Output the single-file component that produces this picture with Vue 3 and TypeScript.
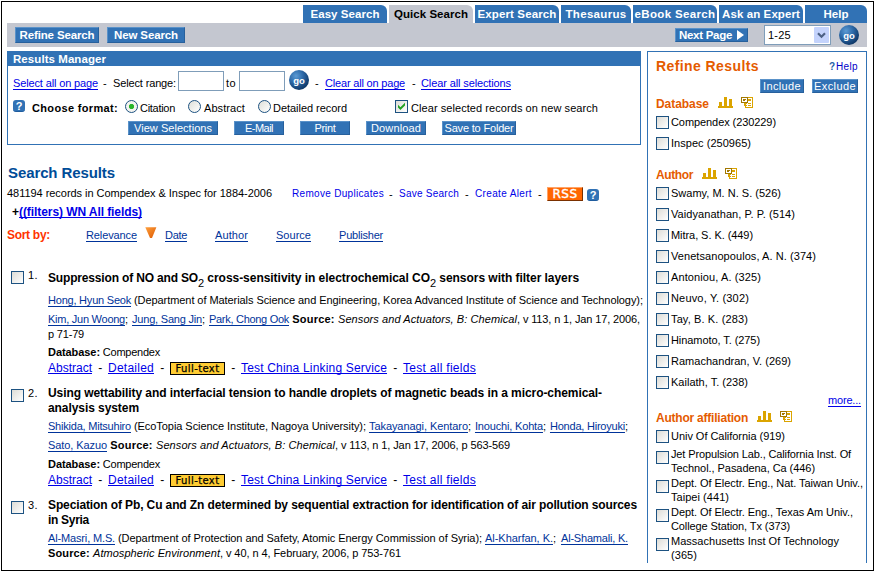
<script setup lang="ts">
import type { ObjectDirective } from 'vue'

type Kind = 'text' | 'link' | 'bold' | 'italic' | 'sub' | 'big' | 'badge'
type Seg = [kind: Kind, text: string, width: number]
interface Line { gap: number; title?: boolean; service?: boolean; segs: Seg[] }
interface Result { id: number; lines: Line[] }
interface Facet { name: string; width: number; items: [string, number][][]; more?: boolean }

// Tracks a run of text so that it takes up the given number of pixels.
const vFit: ObjectDirective<HTMLElement, number> = {
  mounted(el, { value }) {
    const chars = (el.textContent ?? '').length
    if (!chars || !value) return
    const natural = el.getBoundingClientRect().width
    el.style.letterSpacing = `${((value - natural) / chars).toFixed(3)}px`
  },
}

const tabs: { label: string; text: number; size: string; active?: boolean }[] = [
  { label: 'Easy Search', text: 69, size: 'wide' },
  { label: 'Quick Search', text: 74, size: 'wide', active: true },
  { label: 'Expert Search', text: 79, size: 'wide' },
  { label: 'Thesaurus', text: 61, size: 'mid' },
  { label: 'eBook Search', text: 81, size: 'wide' },
  { label: 'Ask an Expert', text: 78, size: 'wide' },
  { label: 'Help', text: 25, size: 'last' },
]

const actions: [string, string, number][] = [
  ['view', 'View Selections', 78],
  ['mail', 'E-Mail', 28],
  ['print', 'Print', 21],
  ['down', 'Download', 50],
  ['save', 'Save to Folder', 69],
]

const services: Line = {
  gap: 2,
  service: true,
  segs: [
    ['big', 'Abstract', 44], ['text', '  -  ', 16], ['big', 'Detailed', 46], ['text', '  -  ', 16],
    ['badge', 'Full-text', 44], ['text', '  -  ', 16], ['big', 'Test China Linking Service', 146],
    ['text', '  -  ', 16], ['big', 'Test all fields', 73],
  ],
}
const database = (gap: number): Line => ({ gap, segs: [['bold', 'Database:', 52], ['text', ' Compendex', 60]] })

const results: Result[] = [
  {
    id: 1,
    lines: [
      { gap: 0, title: true, segs: [
        ['text', 'Suppression of NO and SO', 150], ['sub', '2', 6],
        ['text', ' cross-sensitivity in electrochemical CO', 226], ['sub', '2', 6],
        ['text', ' sensors with filter layers', 143] ] },
      { gap: 8, segs: [
        ['link', 'Hong, Hyun Seok', 83],
        ['text', ' (Department of Materials Science and Engineering, Korea Advanced Institute of Science and Technology);', 512] ] },
      { gap: 5, segs: [
        ['link', 'Kim, Jun Woong', 77], ['text', '; ', 7], ['link', 'Jung, Sang Jin', 70], ['text', '; ', 7],
        ['link', 'Park, Chong Ook', 80], ['bold', ' Source: ', 49],
        ['italic', 'Sensors and Actuators, B: Chemical', 179], ['text', ', v 113, n 1, Jan 17, 2006,', 123] ] },
      { gap: 1, segs: [['text', 'p 71-79', 36]] },
      database(4),
      services,
    ],
  },
  {
    id: 2,
    lines: [
      { gap: 0, title: true, segs: [['text', 'Using wettability and interfacial tension to handle droplets of magnetic beads in a micro-chemical-', 554]] },
      { gap: 1, title: true, segs: [['text', 'analysis system', 91]] },
      { gap: 4, segs: [
        ['link', 'Shikida, Mitsuhiro', 83], ['text', ' (EcoTopia Science Institute, Nagoya University); ', 238],
        ['link', 'Takayanagi, Kentaro', 99], ['text', '; ', 7], ['link', 'Inouchi, Kohta', 68], ['text', '; ', 7],
        ['link', 'Honda, Hiroyuki', 75], ['text', ';', 3] ] },
      { gap: 5, segs: [
        ['link', 'Sato, Kazuo', 59], ['bold', ' Source: ', 49],
        ['italic', 'Sensors and Actuators, B: Chemical', 179], ['text', ', v 113, n 1, Jan 17, 2006, p 563-569', 175] ] },
      database(5),
      services,
    ],
  },
  {
    id: 3,
    lines: [
      { gap: 0, title: true, segs: [['text', 'Speciation of Pb, Cu and Zn determined by sequential extraction for identification of air pollution sources', 589]] },
      { gap: 1, title: true, segs: [['text', 'in Syria', 41]] },
      { gap: 4, segs: [
        ['link', 'Al-Masri, M.S.', 67],
        ['text', ' (Department of Protection and Safety, Atomic Energy Commission of Syria); ', 370],
        ['link', 'Al-Kharfan, K.', 68], ['text', ';  ', 8], ['link', 'Al-Shamali, K.', 67] ] },
      { gap: 1, segs: [
        ['bold', 'Source: ', 45], ['italic', 'Atmospheric Environment', 127],
        ['text', ', v 40, n 4, February, 2006, p 753-761', 181] ] },
    ],
  },
]

const facets: Facet[] = [
  { name: 'Database', width: 53, items: [[['Compendex (230229)', 105]], [['Inspec (250965)', 80]]] },
  {
    name: 'Author', width: 37, more: true,
    items: [
      [['Swamy, M. N. S. (526)', 110]], [['Vaidyanathan, P. P. (514)', 124]], [['Mitra, S. K. (449)', 82]],
      [['Venetsanopoulos, A. N. (374)', 145]], [['Antoniou, A. (325)', 90]], [['Neuvo, Y. (302)', 78]],
      [['Tay, B. K. (283)', 77]], [['Hinamoto, T. (275)', 89]], [['Ramachandran, V. (269)', 120]],
      [['Kailath, T. (238)', 77]],
    ],
  },
  {
    name: 'Author affiliation', width: 92,
    items: [
      [['Univ Of California (919)', 114]],
      [['Jet Propulsion Lab., California Inst. Of', 180], ['Technol., Pasadena, Ca (446)', 144]],
      [['Dept. Of Electr. Eng., Nat. Taiwan Univ.,', 192], ['Taipei (441)', 58]],
      [['Dept. Of Electr. Eng., Texas Am Univ.,', 182], ['College Station, Tx (373)', 119]],
      [['Massachusetts Inst Of Technology', 168], ['(365)', 26]],
    ],
  },
]
</script>

<template>
  <div class="frame">
    <nav class="tabs">
      <a v-for="t in tabs" :key="t.label" class="tab" :class="[t.size, { active: t.active }]"><span v-fit="t.text">{{ t.label }}</span></a>
    </nav>

    <header class="toolbar">
      <button class="btn heavy refine"><span v-fit="75">Refine Search</span></button>
      <button class="btn heavy new"><span v-fit="64">New Search</span></button>
      <button class="btn heavy next">
        <span v-fit="53">Next Page</span>
        <svg width="7" height="10" viewBox="0 0 7 10"><path d="M0 0 7 5 0 10Z" fill="#fff" /></svg>
      </button>
      <div class="select">
        <span v-fit="23">1-25</span>
        <i><svg width="9" height="7" viewBox="0 0 9 7"><path d="M1 1.2 4.5 4.7 8 1.2" fill="none" stroke="#4d6185" stroke-width="2.2" /></svg></i>
      </div>
      <button class="go">go</button>
    </header>

    <div class="columns">
      <main>
        <section class="manager">
          <h2><span v-fit="93">Results Manager</span></h2>
          <div class="range">
            <a class="blue" v-fit="85">Select all on page</a>
            <span>-</span>
            <span v-fit="63">Select range:</span>
            <input type="text" />
            <span v-fit="10">to</span>
            <input type="text" />
            <button class="go">go</button>
            <span>-</span>
            <a class="blue" v-fit="80">Clear all on page</a>
            <span>-</span>
            <a class="blue" v-fit="90">Clear all selections</a>
          </div>
          <div class="format">
            <b class="ask">?</b>
            <strong v-fit="86">Choose format:</strong>
            <i class="radio on"></i><span v-fit="35">Citation</span>
            <i class="radio"></i><span v-fit="41">Abstract</span>
            <i class="radio"></i><span v-fit="74">Detailed record</span>
            <i class="box">
              <svg width="9" height="9" viewBox="0 0 9 9"><path d="M1 2.7V5.4L3.4 8 8 3.4V.8L3.4 5.3Z" fill="#21a121" /></svg>
            </i>
            <span v-fit="187">Clear selected records on new search</span>
          </div>
          <div class="actions">
            <button v-for="a in actions" :key="a[0]" class="btn" :class="a[0]"><span v-fit="a[2]">{{ a[1] }}</span></button>
          </div>
        </section>

        <h1><span v-fit="107">Search Results</span></h1>
        <div class="summary">
          <span v-fit="265">481194 records in Compendex &amp; Inspec for 1884-2006</span>
          <a v-fit="92">Remove Duplicates</a><span>-</span>
          <a v-fit="60">Save Search</a><span>-</span>
          <a v-fit="57">Create Alert</a><span>-</span>
          <b class="rss"><span v-fit="25">RSS</span></b>
          <b class="ask">?</b>
        </div>
        <div class="query"><b>+</b><a class="blue" v-fit="123">((filters) WN All fields)</a></div>
        <div class="sort">
          <b v-fit="43">Sort by:</b>
          <a class="link" v-fit="51">Relevance</a>
          <svg width="12" height="12" viewBox="0 0 12 12">
            <defs><linearGradient id="arrow" x2="1" y2="1"><stop stop-color="#ffa13e" /><stop offset="1" stop-color="#dc5700" /></linearGradient></defs>
            <path d="M.3.3H11.4L7 11H5Z" fill="url(#arrow)" />
          </svg>
          <a class="link" v-fit="22">Date</a>
          <a class="link" v-fit="33">Author</a>
          <a class="link" v-fit="35">Source</a>
          <a class="link" v-fit="44">Publisher</a>
        </div>

        <article v-for="r in results" :key="r.id" :class="'result-' + r.id">
          <i class="box"></i>
          <span class="num" v-fit="10">{{ r.id }}.</span>
          <div class="body">
            <div v-for="(l, i) in r.lines" :key="i" class="line" :class="['gap-' + l.gap, { title: l.title, service: l.service }]">
              <span v-for="(s, j) in l.segs" :key="j" :class="s[0]"><span v-fit="s[2]">{{ s[1] }}</span></span>
            </div>
          </div>
        </article>
      </main>

      <aside>
        <div class="refine-head">
          <h3><span v-fit="103">Refine Results</span></h3>
          <a><b>?</b><span v-fit="22">Help</span></a>
        </div>
        <div class="refine-actions">
          <button class="btn"><span v-fit="38">Include</span></button>
          <button class="btn"><span v-fit="42">Exclude</span></button>
        </div>
        <section v-for="f in facets" :key="f.name" class="facet">
          <h4>
            <span v-fit="f.width">{{ f.name }}</span>
            <svg class="chart" width="15" height="11" viewBox="0 0 15 11" shape-rendering="crispEdges">
              <path d="M0 9h15v2H0zM1 5h3v4H1zM6 0h3v9H6zM11 2h3v7h-3z" fill="#dba400" />
            </svg>
            <svg width="12" height="11" viewBox="0 0 12 11" shape-rendering="crispEdges">
              <path d="M6 0h6v11H4V9H3V6h2v4h6V1H6z" fill="#dba400" />
              <path d="M7 2h3v2H7zM5 6h1v1H5zM7 6h3v1H7zM5 8h1v1H5zM7 8h3v1H7z" fill="#dba400" />
              <path d="M0 0h7v1H0zM0 1h1v4H0zM6 1h1v4H6zM0 5h7v1H0zM2 2h3v1H2zM2 3h2v1H2z" fill="#a37800" />
            </svg>
          </h4>
          <label v-for="(item, i) in f.items" :key="i" :class="{ tall: item.length > 1 }">
            <i class="box"></i>
            <span class="lines"><span v-for="row in item" :key="row[0]"><span v-fit="row[1]">{{ row[0] }}</span></span></span>
          </label>
          <div v-if="f.more" class="more"><a class="blue" v-fit="33">more...</a></div>
        </section>
      </aside>
    </div>
  </div>
</template>

<style>
body { background: #fff; overflow: hidden; }
</style>

<style scoped>
* { box-sizing: border-box; }
.frame {
  width: 873px; height: 570px; margin: 1px; border: 1px solid #000; padding: 3px 6px 0 5px;
  overflow: hidden; color: #000; background: #fff;
  font: 11px/14px "Liberation Sans", Arial, sans-serif; white-space: pre;
}
h1, h2, h3, h4 { margin: 0; }
i { font-style: normal; }
svg { display: block; flex: none; }
button { font: inherit; border: 0; padding: 0; margin: 0; }
.blue { color: #0000e8; text-decoration: underline 1px; text-underline-offset: 2px; text-decoration-skip-ink: none; }
.link { color: #00339a; text-decoration: underline 1px; text-underline-offset: 2px; text-decoration-skip-ink: none; }

.tabs { display: flex; justify-content: flex-end; gap: 2px; height: 18px; }
.tab {
  display: flex; justify-content: center; height: 18px; padding-top: 2px;
  background: #3172b5; color: #fff; font-size: 11.5px; font-weight: bold; border-radius: 0 6px 0 0;
}
.tab.wide { width: 84px; }
.tab.mid { width: 70px; }
.tab.last { width: 62px; }
.tab.active { background: #c4c7d0; color: #000; }

.toolbar { display: flex; align-items: center; height: 24px; background: #c4c7d0; padding: 0 8px; }
.btn {
  display: flex; align-items: center; justify-content: center; height: 14px; line-height: 14px;
  background: #3172b5; color: #fff; border: 1px solid; border-color: #5a92c9 #27609c #27609c #5a92c9;
}
.heavy { font-size: 11.5px; font-weight: bold; height: 16px; }
.refine { width: 84px; margin-right: 8px; }
.new { width: 78px; }
.next { width: 73px; height: 14px; gap: 5px; margin-left: auto; margin-right: 16px; }
.select {
  display: flex; align-items: center; justify-content: space-between; width: 67px; height: 20px;
  border: 1px solid #7f9db9; background: #fff; padding: 0 1px 0 3px; margin-right: 8px;
}
.select i { display: flex; align-items: center; justify-content: center; width: 15px; height: 16px; background: #c4d3fc; border-radius: 1px; }
.go {
  width: 20px; height: 20px; border-radius: 50%; color: #fff; font: bold 9.5px/17px "Liberation Sans", sans-serif; text-align: center;
  background: radial-gradient(circle at 35% 30%, #5c9bd4 0, #2f6cab 35%, #123e70 70%, #061c3c 100%);
}

.columns { display: grid; grid-template-columns: 634px 220px; column-gap: 6px; margin-top: 4px; }
.manager { height: 94px; border: 1px solid #3172b5; }
.manager h2 { height: 14px; background: #3172b5; color: #fff; font-size: 11.5px; line-height: 14px; padding-left: 5px; }
.range { display: grid; grid-template-columns: 90px 10px 65px 48px 13px 50px 26px 10px 87px 9px 92px; align-items: center; height: 20px; margin: 5px 0 0 5px; padding: 0; }
.range > * { justify-self: start; }
.range > :not(button):not(input) { margin-top: 4px; }
.range input { width: 46px; height: 20px; border: 1px solid #7f9db9; padding: 0; background: #fff; }
.range .go { margin-top: -2px; }
.format { display: grid; grid-template-columns: 19px 93px 15px 48px 16px 54px 15px 122px 16px 187px; align-items: center; height: 16px; margin: 8px 0 0 5px; }
.format > * { justify-self: start; }
.format > .ask { margin-top: -2px; }
.format > .radio, .format > .box { margin-top: -1px; }
.format > span, .format > strong { margin-top: 1px; }
.ask {
  display: block; width: 12px; height: 12px; border-radius: 3px; background: #3172b5; color: #fff;
  font: bold 11px/12px "Liberation Sans", sans-serif; text-align: center; border-bottom: 1px solid #1e5c9e;
}
.radio { width: 13px; height: 13px; border: 1px solid #1d5281; border-radius: 50%; background: linear-gradient(135deg, #dedfd8, #fff); }
.radio.on { background: radial-gradient(circle, #2bb52b 0 2.2px, #f4f4f0 3px); }
.box {
  display: flex; align-items: center; justify-content: center; width: 13px; height: 13px; flex: none;
  border: 1px solid #1d5281; background: linear-gradient(135deg, #dddcd6, #fff);
}
.actions { display: flex; gap: 16px; margin: 6px 0 0 120px; }
.view { width: 90px; }
.mail, .print { width: 50px; }
.down { width: 60px; }
.save { width: 74px; }

h1 { margin-top: 19px; height: 20px; padding-left: 1px; font-size: 15px; line-height: 18px; color: #004c98; }
.summary { display: grid; grid-template-columns: 285px 97px 10px 66px 10px 63px 9px 40px 12px; height: 16px; margin-top: 2px; line-height: 16px; }
.summary > * { justify-self: start; }
.summary > span:first-child { margin-top: -1px; }
.summary a { color: #0000e8; font-size: 10px; }
.summary > b { align-self: start; }
.summary .ask { margin-top: 3px; }
.rss {
  display: flex; justify-content: center; width: 36px; height: 14px; background: #ff6600; color: #fff; margin-top: 1px;
  font: 12px/12px "DejaVu Sans", sans-serif; -webkit-text-stroke: 0.4px #fff;
  border: 1px solid; border-color: #ffa366 #7a3000 #7a3000 #ffa366;
}
.query { display: flex; height: 14px; margin-top: 3px; padding-left: 5px; font-size: 12px; font-weight: bold; }
.query .blue { text-underline-offset: 1px; }
.sort { display: grid; grid-template-columns: 79px 59px 20px 50px 61px 63px 44px; height: 14px; margin-top: 9px; }
.sort > * { justify-self: start; }
.sort b { color: #ff3300; font-size: 12px; }
.sort svg { margin-top: -1px; }

article { display: grid; grid-template-columns: 17px 20px 1fr; padding-left: 4px; margin-top: 11px; }
.result-1 { margin-top: 29px; }
.num { justify-self: start; align-self: start; }
.result-1 .num { margin-top: -3px; }
article .box { margin-top: 3px; }
.result-1 .box { margin-top: 0; }
.line { display: flex; height: 14px; }
.line > span { flex: none; }
.gap-1 { margin-top: 1px; }
.gap-2 { margin-top: 2px; }
.gap-4 { margin-top: 4px; }
.gap-5 { margin-top: 5px; }
.gap-8 { margin-top: 8px; }
.title { font-size: 12px; font-weight: bold; }
.bold { font-weight: bold; }
.italic { font-style: italic; }
.sub { font-weight: normal; font-size: 11px; padding-top: 5px; }
.service { font-size: 12px; }
.big { color: #0000e8; text-decoration: underline 1px; text-underline-offset: 1px; text-decoration-skip-ink: none; }
.badge {
  display: flex; justify-content: center; width: 55px; height: 13px; margin-top: 1px; border: 1px solid #000; background: #ffcc33;
  font: 10px/11px "DejaVu Sans", sans-serif; -webkit-text-stroke: 0.25px #000;
}

aside { height: 512px; border: 1px solid #3172b5; border-bottom: 0; padding-left: 8px; }
.refine-head { display: flex; justify-content: space-between; height: 19px; margin-top: 5px; padding-right: 8px; }
h3 { font-size: 14px; line-height: 18px; color: #e55b00; }
.refine-head a { display: flex; gap: 1px; color: #0000c8; font-size: 10px; line-height: 19px; }
.refine-head b { color: #1f5fa8; }
.refine-actions { display: flex; gap: 8px; justify-content: flex-end; margin-top: 3px; padding-right: 8px; }
.refine-actions .btn { width: 46px; }
.refine-actions .btn:first-child { width: 44px; }
.facet { margin-top: 4px; }
.facet:nth-of-type(2) { margin-top: 14px; }
h4 { display: flex; height: 15px; font-size: 12px; line-height: 14px; color: #e55b00; }
h4 .chart { margin: 0 8px 0 9px; }
label { display: flex; height: 21px; gap: 2px; padding-top: 3px; }
label .box { margin-top: 1px; }
label.tall { height: 29px; padding-top: 0; }
label.tall .box { margin-top: 4px; }
.lines { display: flex; flex-direction: column; }
.more { display: flex; justify-content: flex-end; height: 14px; padding-right: 5px; }
</style>
